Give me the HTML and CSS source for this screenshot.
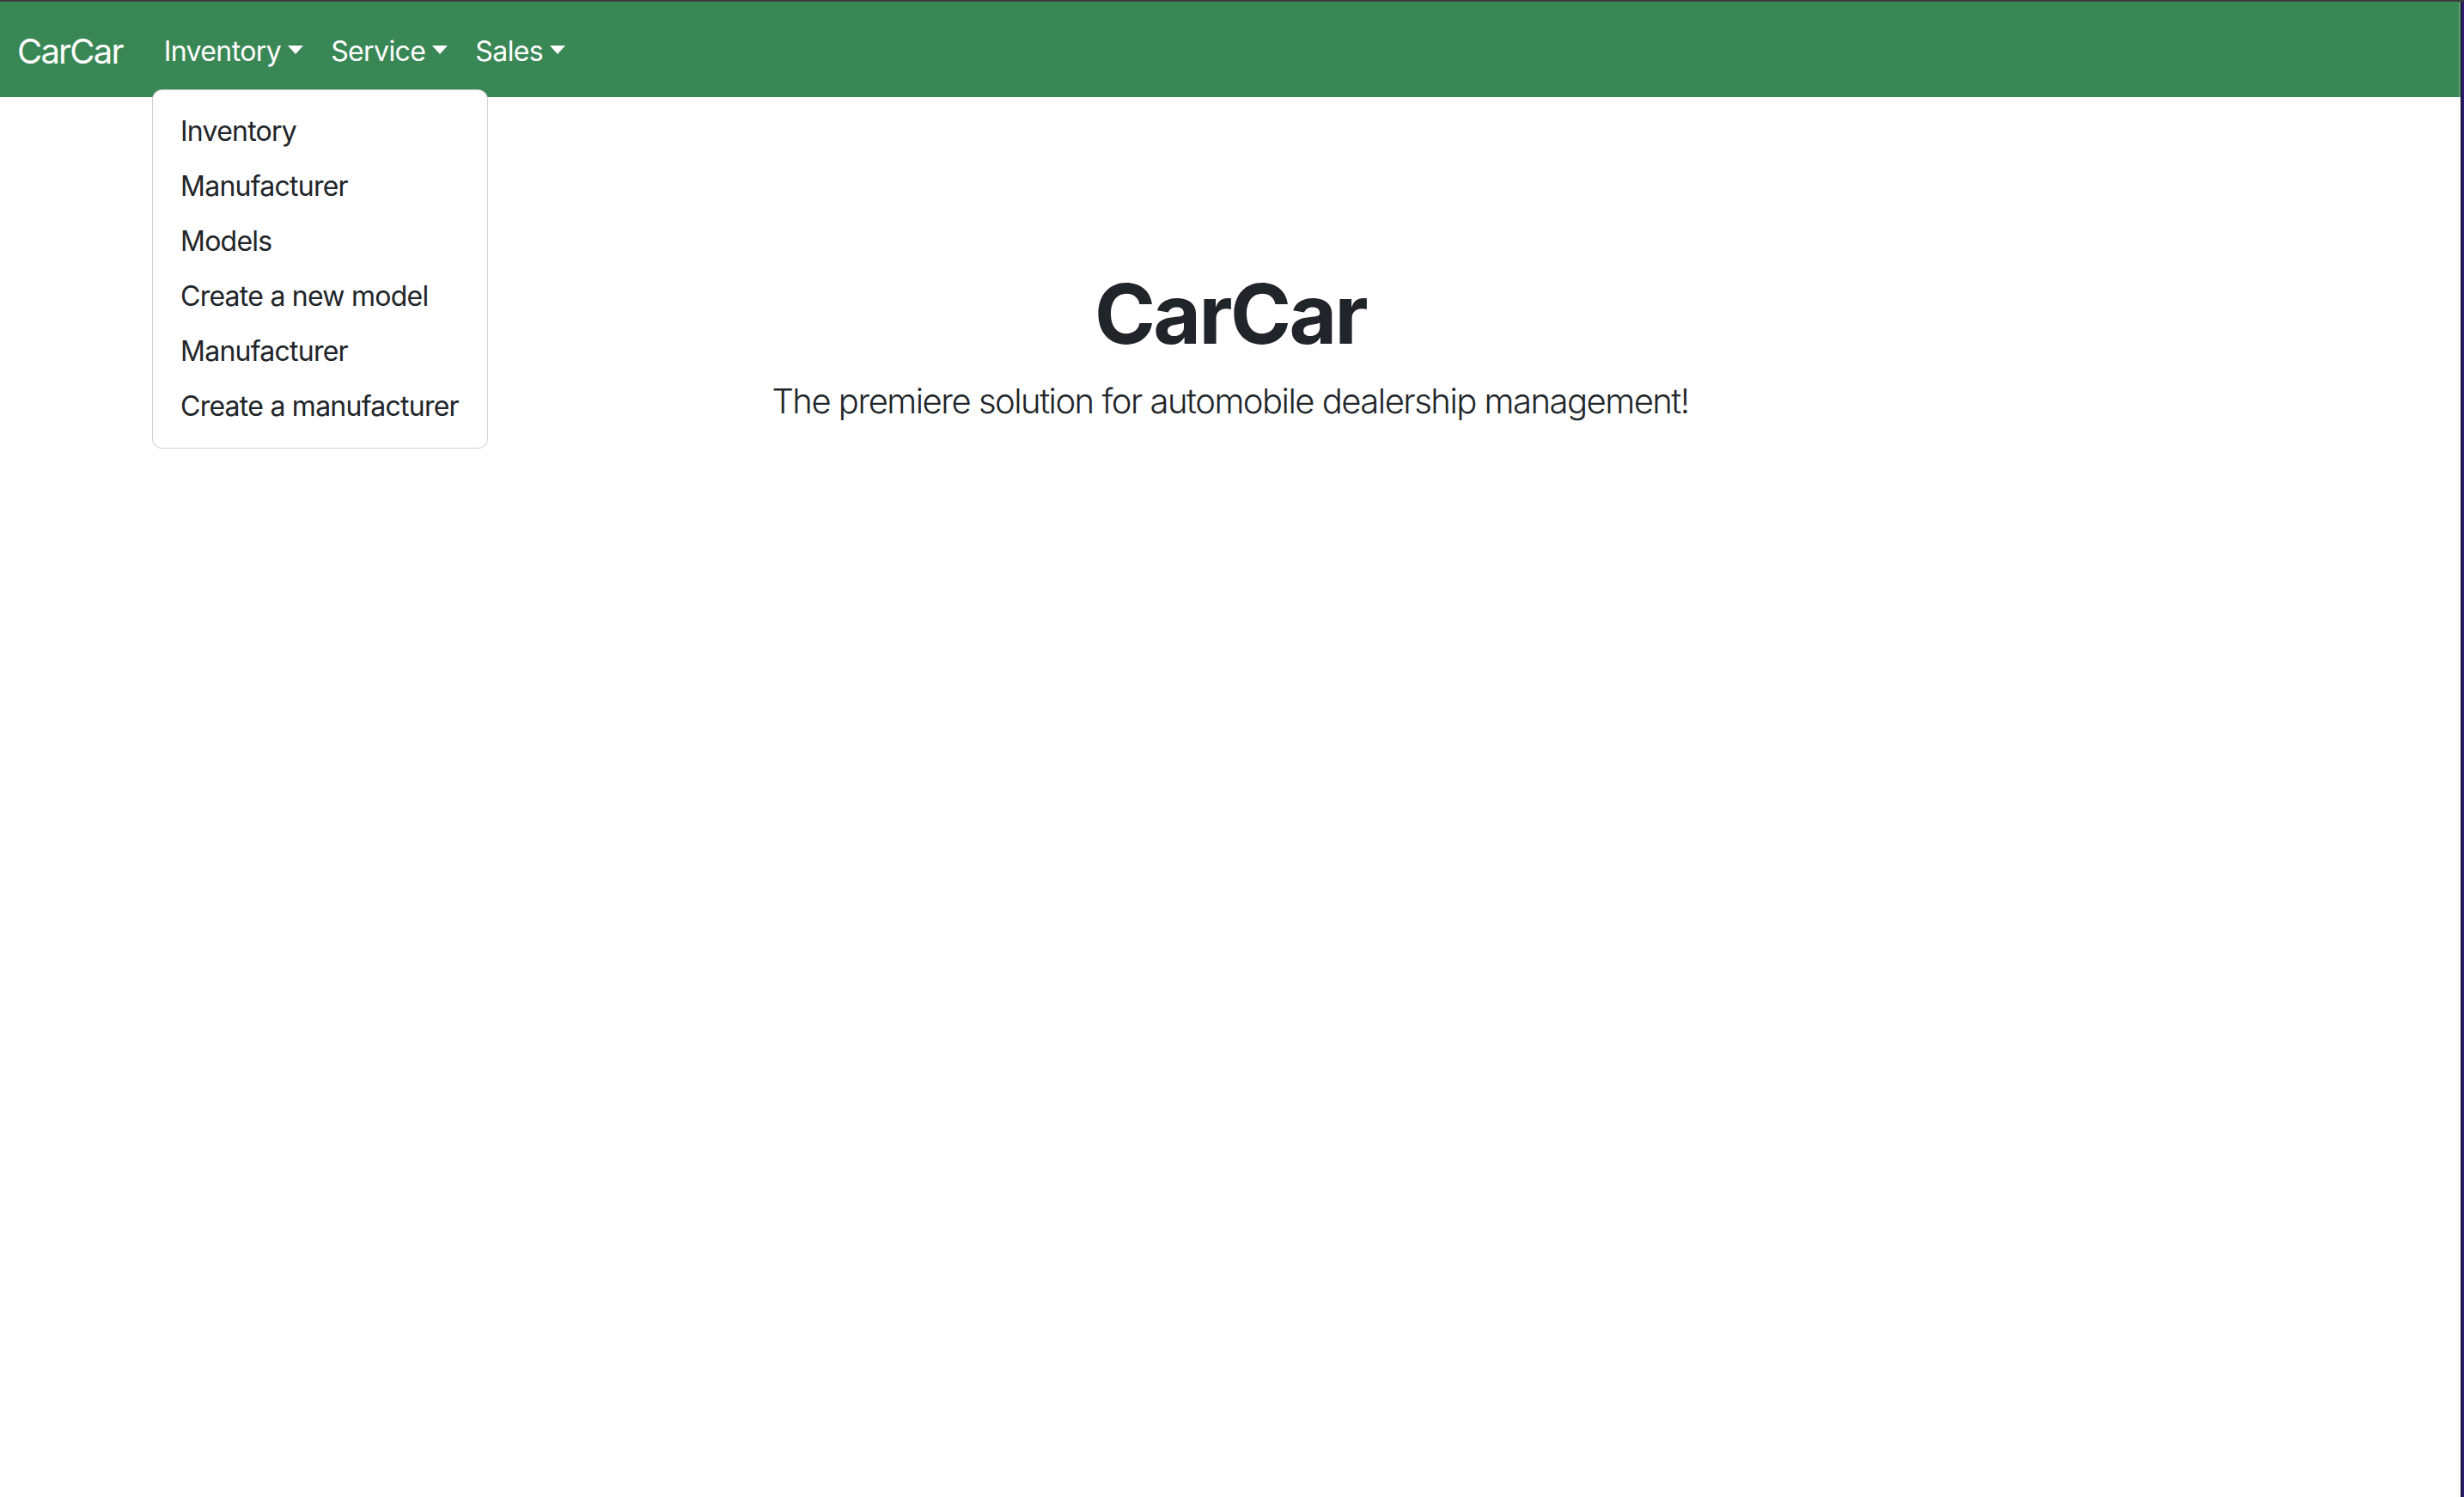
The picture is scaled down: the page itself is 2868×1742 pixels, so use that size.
FILE: index.html
```html
<!DOCTYPE html>
<html lang="en">
<head>
<meta charset="utf-8">
<title>CarCar</title>
<link rel="stylesheet" href="styles.css">
</head>
<body>
<div class="window">
  <div class="page">
    <nav class="navbar">
      <a class="brand" href="#">CarCar</a>
      <ul class="nav">
        <li class="nav-item"><a class="nav-link" href="#">Inventory<span class="caret"></span></a></li>
        <li class="nav-item"><a class="nav-link" href="#">Service<span class="caret"></span></a></li>
        <li class="nav-item"><a class="nav-link" href="#">Sales<span class="caret"></span></a></li>
      </ul>
    </nav>
    <ul class="dropdown-menu">
      <li><a class="dropdown-item" href="#">Inventory</a></li>
      <li><a class="dropdown-item" href="#">Manufacturer</a></li>
      <li><a class="dropdown-item" href="#">Models</a></li>
      <li><a class="dropdown-item" href="#">Create a new model</a></li>
      <li><a class="dropdown-item" href="#">Manufacturer</a></li>
      <li><a class="dropdown-item" href="#">Create a manufacturer</a></li>
    </ul>
    <main class="hero">
      <h1 class="hero-title">CarCar</h1>
      <p class="lead">The premiere solution for automobile dealership management!</p>
    </main>
  </div>
  <div class="edge"></div>
</div>
</body>
</html>
```

FILE: styles.css
```css
* { box-sizing: border-box; }
html, body {
  margin: 0;
  padding: 0;
  height: 100%;
  background: #ffffff;
}
body {
  font-family: "Inter", "Roboto", "Liberation Sans", sans-serif;
  color: #212529;
}
.window {
  display: flex;
  height: 100vh;
  border-top: 2px solid #3b3b3b;
}
.page {
  flex: 1;
  position: relative;
  background: #ffffff;
}
.edge {
  width: 4px;
  border-left: 1px solid #141414;
  background: #2c1a6c;
}
.navbar {
  display: flex;
  align-items: center;
  height: 111px;
  padding: 18px 20px 14px;
  background: #3a8756;
  border-right: 2px solid #5f9f76;
}
.brand {
  font-size: 40px;
  line-height: 60px;
  padding: 10px 0;
  margin-right: 32px;
  color: #ffffff;
  text-decoration: none;
  letter-spacing: -1.8px;
}
.nav {
  display: flex;
  list-style: none;
  margin: 0;
  padding: 0;
}
.nav-link {
  display: block;
  padding: 8px 16px;
  font-size: 32px;
  line-height: 48px;
  color: #ffffff;
  text-decoration: none;
  letter-spacing: -0.6px;
}
.caret {
  display: inline-block;
  margin-left: 8px;
  vertical-align: 8px;
  border-top: 10px solid #ffffff;
  border-left: 9.5px solid transparent;
  border-right: 9.5px solid transparent;
}
.dropdown-menu {
  position: absolute;
  top: 102px;
  left: 177px;
  margin: 0;
  padding: 16px 0;
  list-style: none;
  background: #ffffff;
  border: 1px solid rgba(0, 0, 0, 0.175);
  border-radius: 12px;
  width: 391px;
}
.dropdown-item {
  display: block;
  padding: 8px 32px;
  font-size: 32px;
  line-height: 48px;
  color: #212529;
  text-decoration: none;
  white-space: nowrap;
  letter-spacing: -0.75px;
}
.hero {
  margin-top: 195px;
  text-align: center;
}
.hero-title {
  margin: 0 0 14px;
  font-size: 96px;
  line-height: 1.2;
  font-weight: 700;
  letter-spacing: -2.6px;
}
.lead {
  margin: 0;
  font-size: 40px;
  line-height: 1.5;
  font-weight: 300;
  letter-spacing: -1.5px;
}
```
